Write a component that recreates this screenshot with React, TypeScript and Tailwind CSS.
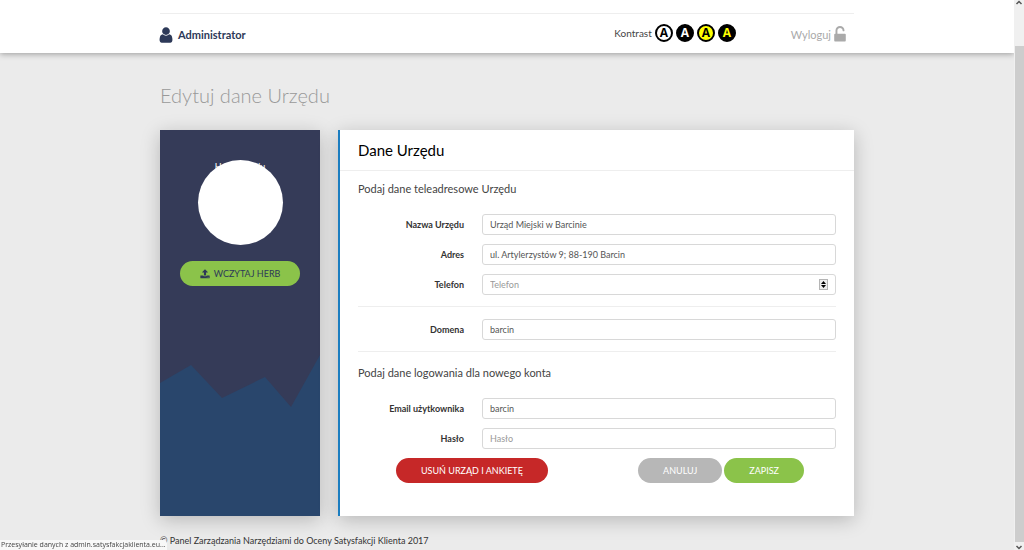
import type { InputHTMLAttributes, ReactNode } from "react"
import { clsx } from "clsx"

const contrasts = [
  { name: "Kontrast domyślny", style: "bg-white text-black" },
  { name: "Biały na czarnym", style: "bg-black text-white" },
  { name: "Czarny na żółtym", style: "bg-[#ffff00] text-black" },
  { name: "Żółty na czarnym", style: "bg-black text-[#ffff00]" },
]

const icons = {
  user: "M1536 1399q0 109-62.5 187t-150.5 78h-854q-88 0-150.5-78t-62.5-187q0-85 8.5-160.5t31.5-152 58.5-131 94-89 134.5-34.5q131 128 313 128t313-128q76 0 134.5 34.5t94 89 58.5 131 31.5 152 8.5 160.5zm-256-887q0 159-112.5 271.5t-271.5 112.5-271.5-112.5-112.5-271.5 112.5-271.5 271.5-112.5 271.5 112.5 112.5 271.5z",
  unlock: "M1376 768q40 0 68 28t28 68v576q0 40-28 68t-68 28h-960q-40 0-68-28t-28-68v-576q0-40 28-68t68-28h32v-320q0-185 131.5-316.5t316.5-131.5 316.5 131.5 131.5 316.5q0 26-19 45t-45 19h-64q-26 0-45-19t-19-45q0-106-75-181t-181-75-181 75-75 181v320h736z",
  upload: "M1344 1472q0-26-19-45t-45-19-45 19-19 45 19 45 45 19 45-19 19-45zm256 0q0-26-19-45t-45-19-45 19-19 45 19 45 45 19 45-19 19-45zm128-224v320q0 40-28 68t-68 28h-1472q-40 0-68-28t-28-68v-320q0-40 28-68t68-28h427q21 56 70.5 92t110.5 36h256q61 0 110.5-36t70.5-92h427q40 0 68 28t28 68zm-325-648q-17 40-59 40h-256v448q0 26-19 45t-45 19h-256q-26 0-45-19t-19-45v-448h-256q-42 0-59-40-17-39 14-69l448-448q18-19 45-19t45 19l448 448q31 30 14 69z",
}

function Icon({ name, className }: { name: keyof typeof icons; className?: string }) {
  return (
    <svg viewBox="0 0 1792 1792" fill="currentColor" aria-hidden="true" className={className}>
      <path d={icons[name]} />
    </svg>
  )
}

type FieldProps = InputHTMLAttributes<HTMLInputElement> & { id: string; label: string; children?: ReactNode }

function Field({ id, label, children, ...input }: FieldProps) {
  return (
    <div className="flex items-center gap-[18px]">
      <label htmlFor={id} className="w-[106px] shrink-0 text-right text-[9px] font-bold text-[#333]">
        {label}
      </label>
      <div className="relative min-w-0 flex-1">
        <input
          id={id}
          className="block h-[21px] w-full appearance-none rounded-[3px] border border-[#d8d8d8] bg-white px-[7px] text-[9px] text-[#555] placeholder:text-[#999]"
          {...input}
        />
        {children}
      </div>
    </div>
  )
}

function Spinner() {
  return (
    <div className="absolute right-2 top-[5px] flex h-[11px] w-[9px] flex-col border border-[#b5b5b5] bg-[#eee]">
      <button type="button" aria-label="Zwiększ" className="flex flex-1 items-center justify-center">
        <svg viewBox="0 0 5 3" className="h-[3px] w-[5px]"><path d="M0 3 2.5 0 5 3z" /></svg>
      </button>
      <button type="button" aria-label="Zmniejsz" className="flex flex-1 items-center justify-center">
        <svg viewBox="0 0 5 3" className="h-[3px] w-[5px]"><path d="M0 0h5L2.5 3z" /></svg>
      </button>
    </div>
  )
}

function Header() {
  return (
    <header className="relative bg-white px-4 pt-[13px] shadow-[0_1px_6px_rgba(0,0,0,0.35)]">
      <div className="mx-auto flex h-10 max-w-[694px] items-center border-t border-[#eee] pt-[3px]">
        <div className="flex flex-1 items-center gap-[3px] text-[#2d3958]">
          <Icon name="user" className="-ml-[3px] size-[18px]" />
          <span className="text-[11px] font-bold">Administrator</span>
        </div>
        <div className="flex items-center gap-[3px] pb-[5px]">
          <span className="pt-[2px] text-[10px] text-[#444]">Kontrast</span>
          <div className="flex gap-[3px]">
            {contrasts.map((c) => (
              <button
                key={c.name}
                type="button"
                aria-label={c.name}
                className={clsx("flex size-[18px] items-center justify-center rounded-full border-2 border-black font-['Open_Sans',sans-serif] text-[12px] font-bold leading-none", c.style)}
              >
                A
              </button>
            ))}
          </div>
        </div>
        <a href="#wyloguj" className="ml-[55px] mr-[5px] flex items-center text-[11px] text-[#aaa]">
          Wyloguj
          <Icon name="unlock" className="size-[18px]" />
        </a>
      </div>
    </header>
  )
}

function Sidebar() {
  return (
    <aside className="flex w-40 shrink-0 flex-col items-center bg-[#353b58] pt-[30px] shadow-[0_4px_18px_rgba(0,0,0,0.22)]">
      <div className="flex size-[85px] justify-center rounded-full bg-white">
        <span className="whitespace-nowrap text-[9px] leading-[14px] text-white">Herb Urzędu</span>
      </div>
      <button type="button" className="mt-4 flex h-[25px] w-[120px] items-center justify-center gap-1 rounded-full bg-[#8bc34a] text-[9px] text-[#2d3958]">
        <Icon name="upload" className="size-[10px]" />
        WCZYTAJ HERB
      </button>
      <svg viewBox="0 0 160 161" preserveAspectRatio="none" className="mt-auto h-[161px] w-full" aria-hidden="true">
        <path d="M0 28 31 10 62 43 105 22 131 52 160 0V161H0z" fill="#29466c" />
      </svg>
    </aside>
  )
}

function OfficeForm() {
  return (
    <section className="min-w-0 flex-1 border-l-2 border-[#1b7dc0] bg-white shadow-[0_4px_18px_rgba(0,0,0,0.22)]">
      <h2 className="flex h-[41px] items-center border-b border-[#eee] px-[18px] text-[15px] text-black">Dane Urzędu</h2>
      <form className="px-[18px] pb-[33px] pt-[9px]">
        <h3 className="mb-[17px] text-[11px] leading-[17px] text-[#444]">Podaj dane teleadresowe Urzędu</h3>
        <div className="flex flex-col gap-[9px]">
          <Field id="name" label="Nazwa Urzędu" defaultValue="Urząd Miejski w Barcinie" />
          <Field id="address" label="Adres" defaultValue="ul. Artylerzystów 9; 88-190 Barcin" />
          <Field id="phone" label="Telefon" placeholder="Telefon" inputMode="numeric">
            <Spinner />
          </Field>
        </div>
        <hr className="mb-3 mt-[11px] border-[#eee]" />
        <Field id="domain" label="Domena" defaultValue="barcin" />
        <hr className="mb-3 mt-[11px] border-[#eee]" />
        <h3 className="mb-[17px] text-[11px] leading-[17px] text-[#444]">Podaj dane logowania dla nowego konta</h3>
        <div className="flex flex-col gap-[9px]">
          <Field id="email" label="Email użytkownika" defaultValue="barcin" />
          <Field id="password" label="Hasło" type="password" placeholder="Hasło" />
        </div>
        <div className="mt-[9px] flex justify-between pl-[38px] pr-8 text-[9px] text-white">
          <button type="button" className="h-[25px] rounded-full bg-[#c62828] px-[25px]">USUŃ URZĄD I ANKIETĘ</button>
          <div className="flex gap-[2px]">
            <button type="button" className="h-[25px] rounded-full bg-[#b7b7b7] px-[25px]">ANULUJ</button>
            <button type="submit" className="h-[25px] rounded-full bg-[#8bc34a] px-[25px]">ZAPISZ</button>
          </div>
        </div>
      </form>
    </section>
  )
}

function Scrollbar() {
  return (
    <div className="flex w-[10px] shrink-0 flex-col items-center bg-[#f0f0f0]" aria-hidden="true">
      <svg viewBox="0 0 20 16" className="h-2 w-[10px]"><path d="M5 8 10 3 15 8" fill="none" stroke="#555" strokeWidth="3" /></svg>
      <div className="mt-[38px] w-[9px] flex-1 bg-[#cdcdcd]" />
      <svg viewBox="0 0 20 16" className="h-2 w-[10px]"><path d="M5 8 10 13 15 8" fill="none" stroke="#555" strokeWidth="3" /></svg>
    </div>
  )
}

export default function App() {
  return (
    <div className="flex min-h-screen bg-[#ebebeb] font-[Lato,sans-serif]">
      <div className="min-w-0 flex-1 overflow-hidden">
        <Header />
        <main className="mx-auto max-w-[694px]">
          <h1 className="pb-5 pt-[27px] text-[20px] font-light leading-[30px] text-[#999]">Edytuj dane Urzędu</h1>
          <div className="flex gap-[18px]">
            <Sidebar />
            <OfficeForm />
          </div>
          <footer className="pt-[17px] text-[9px] leading-4 text-[#333]">
            © Panel Zarządzania Narzędziami do Oceny Satysfakcji Klienta 2017
          </footer>
        </main>
      </div>
      <Scrollbar />
      <div className="fixed bottom-0 left-0 rounded-tr-sm bg-[#f8f8f8] px-px font-['Open_Sans',sans-serif] text-[7px] leading-[10px] text-[#444]">
        Przesyłanie danych z admin.satysfakcjaklienta.eu...
      </div>
    </div>
  )
}
